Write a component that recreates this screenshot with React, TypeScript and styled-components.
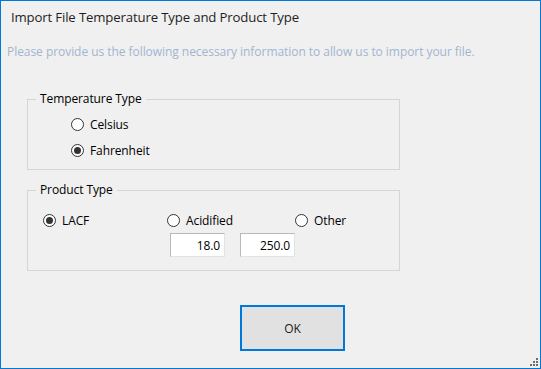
import styled, { createGlobalStyle } from 'styled-components'

const GlobalStyle = createGlobalStyle`
  html, body {
    margin: 0;
    padding: 0;
    background: #f0f0f0;
  }
  * {
    box-sizing: border-box;
  }
`

const Window = styled.div`
  position: relative;
  width: 541px;
  height: 369px;
  border: 1px solid #0078d7;
  background: #f0f0f0;
  font-family: 'Open Sans', 'Noto Sans', Arial, sans-serif;
  color: #000;
  display: flex;
  flex-direction: column;
`

const Title = styled.div`
  margin: 6px 0 0 10px;
  height: 20px;
  line-height: 20px;
  font-size: 13.2px;
  letter-spacing: -0.15px;
  color: #1e1e1e;
`

const Subtitle = styled.div`
  margin: 17px 0 0 6px;
  height: 16px;
  line-height: 16px;
  font-size: 12px;
  letter-spacing: -0.05px;
  color: #a2b5d0;
`

const GroupBox = styled.fieldset<{ $height: number }>`
  margin: 0 0 0 26px;
  padding: 0;
  width: 373px;
  height: ${(p) => p.$height}px;
  min-width: 0;
  border: 1px solid #d5d5d5;
  display: flex;
  flex-direction: column;
`

const Legend = styled.legend`
  margin-left: 8px;
  padding: 0 4px;
  font-size: 12px;
  line-height: 16px;
  letter-spacing: -0.1px;
`

const TempGroup = styled.div`
  display: flex;
  flex-direction: column;
  gap: 10px;
  padding: 9px 0 0 43px;
`

const ProductRow = styled.div`
  display: grid;
  grid-template-columns: 124px 128px auto;
  padding: 14px 0 0 15px;
`

const Option = styled.label`
  display: flex;
  align-items: center;
  gap: 6px;
  height: 16px;
  font-size: 12px;
  letter-spacing: -0.1px;
  cursor: default;
`

const Circle = styled.span<{ $checked: boolean }>`
  width: 13px;
  height: 13px;
  border-radius: 50%;
  border: 1px solid #333;
  background: #fff;
  display: flex;
  align-items: center;
  justify-content: center;
  flex: none;

  &::after {
    content: '';
    width: 7px;
    height: 7px;
    border-radius: 50%;
    background: ${(p) => (p.$checked ? '#333' : 'transparent')};
  }
`

const InputRow = styled.div`
  display: flex;
  gap: 15px;
  padding: 5px 0 0 142px;
`

const NumberBox = styled.input`
  width: 55px;
  height: 24px;
  border: 1px solid #e3e3e3;
  border-top-color: #b9b9b9;
  border-left-color: #b9b9b9;
  background: #fff;
  text-align: right;
  padding: 0 4px 0 0;
  font-family: inherit;
  font-size: 12px;
  letter-spacing: -0.1px;
  color: #000;
  outline: none;
`

const Footer = styled.div`
  display: flex;
  padding: 34px 0 0 239px;
`

const OkButton = styled.button`
  width: 105px;
  height: 46px;
  border: 2px solid #0078d7;
  background: #e1e1e1;
  font-family: inherit;
  font-size: 12px;
  color: #222;
  padding: 0;
`

const Grip = styled.svg`
  position: absolute;
  right: 1px;
  bottom: 1px;
`

const Spacer = styled.div<{ $h: number }>`
  height: ${(p) => p.$h}px;
  flex: none;
`

const Radio = ({ label, checked }: { label: string; checked?: boolean }) => (
  <Option>
    <Circle $checked={!!checked} />
    {label}
  </Option>
)

const App = () => {
  return (
    <>
      <GlobalStyle />
      <Window>
        <Title>Import File Temperature Type and Product Type</Title>
        <Subtitle>
          Please provide us the following necessary information to allow us to import your file.
        </Subtitle>

        <Spacer $h={31} />
        <GroupBox $height={79}>
          <Legend>Temperature Type</Legend>
          <TempGroup>
            <Radio label="Celsius" />
            <Radio label="Fahrenheit" checked />
          </TempGroup>
        </GroupBox>

        <Spacer $h={12} />
        <GroupBox $height={89}>
          <Legend>Product Type</Legend>
          <ProductRow>
            <Radio label="LACF" checked />
            <Radio label="Acidified" />
            <Radio label="Other" />
          </ProductRow>
          <InputRow>
            <NumberBox defaultValue="18.0" />
            <NumberBox defaultValue="250.0" />
          </InputRow>
        </GroupBox>

        <Footer>
          <OkButton>OK</OkButton>
        </Footer>

        <Grip width="9" height="9" viewBox="0 0 9 9">
          <g fill="#6d6d6d">
            <rect x="6" y="0" width="2" height="2" />
            <rect x="3" y="3" width="2" height="2" />
            <rect x="6" y="3" width="2" height="2" />
            <rect x="0" y="6" width="2" height="2" />
            <rect x="3" y="6" width="2" height="2" />
            <rect x="6" y="6" width="2" height="2" />
          </g>
        </Grip>
      </Window>
    </>
  )
}

export default App
